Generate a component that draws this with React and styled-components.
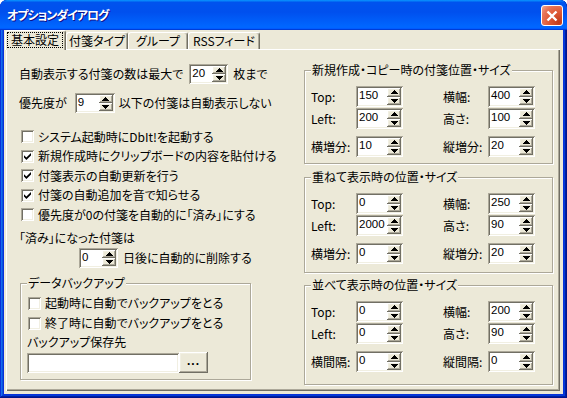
import React from 'react';
import styled, { createGlobalStyle } from 'styled-components';

const GlobalStyle = createGlobalStyle`
  html, body {
    margin: 0;
    padding: 0;
    background: #ffffff;
  }
  body {
    font-family: "Noto Sans CJK JP", "Noto Sans", sans-serif;
    font-size: 12px;
    color: #000;
    font-feature-settings: "palt";
  }
`;

const sunken = `
  box-shadow: inset 1px 1px #aca899, inset -1px -1px #ffffff,
    inset 2px 2px #716f64, inset -2px -2px #f1efe2;
`;

const raised = `
  box-shadow: inset -1px -1px #716f64, inset 1px 1px #ffffff,
    inset -2px -2px #aca899, inset 2px 2px #f1efe2;
`;

const Window = styled.div`
  width: 567px;
  height: 398px;
  display: flex;
  flex-direction: column;
  background: #0831d9;
  border-radius: 7px 7px 0 0;
  overflow: hidden;
  box-shadow: inset -1px -1px #00138c, inset 1px 1px #0831d9,
    inset -2px -2px #001ea0, inset 2px 2px #166aee,
    inset -3px -3px #003bda, inset 3px 3px #0855dd;
`;

const TitleBar = styled.div`
  flex: none;
  height: 30px;
  box-sizing: border-box;
  padding: 0 4px 1px 7px;
  display: flex;
  align-items: center;
  justify-content: space-between;
  border-radius: 7px 7px 0 0;
  background: linear-gradient(180deg, #0997ff, #0053ee 8%, #0050ee 40%,
    #0066ff 88%, #0066ff 93%, #005bff 95%, #003dd7 96%, #003dd7);
`;

const Title = styled.div`
  color: #fff;
  font-weight: bold;
  font-size: 12px;
  letter-spacing: -1px;
  text-shadow: 1px 1px #0f1089;
`;

const CloseButton = styled.div`
  box-sizing: border-box;
  width: 22px;
  height: 21px;
  margin-top: 2px;
  border: 1px solid #fff;
  border-radius: 3px;
  display: flex;
  align-items: center;
  justify-content: center;
  background: radial-gradient(circle at 85% 85%, #c23b1a 0%, #df5a36 45%, #e8765a 75%, #f4ab93 100%);
`;

const Client = styled.div`
  flex: 1;
  min-height: 0;
  margin: 0 4px 4px;
  padding: 0 3px 3px 2px;
  background: #ece9d8;
  display: flex;
  flex-direction: column;
`;

const TabStrip = styled.div`
  flex: none;
  height: 19px;
  margin-left: -1px;
  display: flex;
  align-items: flex-end;
  position: relative;
  z-index: 1;
`;

const Tab = styled.div`
  box-sizing: border-box;
  width: ${p => p.$w}px;
  height: ${p => (p.$active ? 20 : 17)}px;
  margin-bottom: ${p => (p.$active ? -1 : 0)}px;
  display: flex;
  align-items: center;
  justify-content: center;
  background: #ece9d8;
  border-top: 1px solid #fff;
  border-left: 1px solid #fff;
  border-right: 1px solid #716f64;
  border-radius: 3px 3px 0 0;
  box-shadow: inset -1px 0 #aca899;
  line-height: 14px;
  white-space: nowrap;
`;

const FocusLabel = styled.span`
  flex: 1;
  align-self: stretch;
  margin: 1px 2px 2px 1px;
  display: flex;
  align-items: center;
  justify-content: center;
  outline: 1px dotted #000;
  outline-offset: -1px;
`;

const Panel = styled.div`
  flex: 1;
  display: flex;
  justify-content: space-between;
  padding: 15px 7px 0 13px;
  box-shadow: inset 1px 1px #ffffff, inset -1px -1px #716f64, inset -2px -2px #aca899;
`;

const LeftCol = styled.div`
  width: 280px;
  display: flex;
  flex-direction: column;
`;

const RightCol = styled.div`
  width: 249px;
  margin-top: 6px;
  display: flex;
  flex-direction: column;
`;

const Row = styled.div`
  display: flex;
  align-items: center;
  height: ${p => p.$h || 20}px;
  margin-top: ${p => p.$mt || 0}px;
  padding-left: ${p => p.$pl || 0}px;
  white-space: nowrap;
  line-height: 16px;
`;

const CheckList = styled.div`
  margin-top: 14px;
`;

const CheckRow = styled.div`
  display: flex;
  align-items: center;
  height: ${p => p.$h || 19.5}px;
  padding-left: ${p => p.$pl ?? 2}px;
  white-space: nowrap;
  line-height: 16px;
`;

const Box = styled.span`
  box-sizing: border-box;
  flex: none;
  width: 13px;
  height: 13px;
  margin-right: 4px;
  display: flex;
  align-items: center;
  justify-content: center;
  background: #fff;
  ${sunken}
`;

const SpinBox = styled.div`
  box-sizing: border-box;
  flex: none;
  width: ${p => p.$w}px;
  height: ${p => p.$h || 20}px;
  margin: 0 ${p => p.$mr || 0}px 0 ${p => p.$ml || 0}px;
  padding: 2px;
  display: flex;
  background: #fff;
  ${sunken}
`;

const SpinValue = styled.span`
  flex: 1;
  padding-left: 1px;
  font-family: "Liberation Sans", "Noto Sans CJK JP", sans-serif;
  font-size: 11.5px;
  line-height: 14px;
  overflow: hidden;
`;

const SpinButtons = styled.div`
  width: 14px;
  display: flex;
  flex-direction: column;
`;

const SpinButton = styled.div`
  flex: 1;
  display: flex;
  align-items: center;
  justify-content: center;
  background: #ece9d8;
  ${raised}
`;

const GroupBox = styled.div`
  position: relative;
  box-sizing: border-box;
  height: ${p => p.$h}px;
  width: ${p => (p.$w ? `${p.$w}px` : 'auto')};
  margin: ${p => p.$mt || 0}px 0 0 ${p => p.$ml || 0}px;
  padding: ${p => p.$pt}px 0 0 6px;
  border: 1px solid #aca899;
  box-shadow: inset 1px 1px #fff, 1px 1px #fff;
  display: flex;
  flex-direction: column;
`;

const Legend = styled.span`
  position: absolute;
  top: -9px;
  left: 6px;
  padding: 0 1px;
  background: #ece9d8;
  line-height: 16px;
  white-space: nowrap;
`;

const FieldRow = styled.div`
  display: grid;
  grid-template-columns: 45px 87px 45px 47px;
  height: 21px;
  margin-top: ${p => p.$mt || 0}px;
  align-items: center;
  line-height: 16px;
  white-space: nowrap;
`;

const PathInput = styled.div`
  box-sizing: border-box;
  width: 152px;
  height: 20px;
  background: #fff;
  ${sunken}
`;

const DotsButton = styled.div`
  box-sizing: border-box;
  width: 29px;
  height: 21px;
  display: flex;
  align-items: center;
  justify-content: center;
  background: #ece9d8;
  font-family: "Liberation Sans", sans-serif;
  font-weight: bold;
  font-size: 12px;
  letter-spacing: 1px;
  padding-bottom: 3px;
  ${raised}
`;

const Arrow = ({ down }) => (
  <svg width="7" height="4" viewBox="0 0 7 4" shapeRendering="crispEdges">
    <polygon points={down ? '0,0 7,0 3.5,4' : '3.5,0 7,4 0,4'} fill="#000" />
  </svg>
);

const Spin = ({ value, w, h, ml, mr }) => (
  <SpinBox $w={w} $h={h} $ml={ml} $mr={mr}>
    <SpinValue>{value}</SpinValue>
    <SpinButtons>
      <SpinButton><Arrow /></SpinButton>
      <SpinButton><Arrow down /></SpinButton>
    </SpinButtons>
  </SpinBox>
);

const Check = ({ checked, label, pl }) => (
  <CheckRow $pl={pl} $h={pl === 1 ? 20 : undefined}>
    <Box>
      {checked && (
        <svg width="7" height="7" viewBox="0 0 7 7">
          <polygon points="0,2.2 2.4,4.6 7,0 7,2.4 2.4,7 0,4.6" fill="#000" />
        </svg>
      )}
    </Box>
    {label}
  </CheckRow>
);

const tabs = [
  { label: '基本設定', w: 61, active: true },
  { label: '付箋タイプ', w: 62 },
  { label: 'グループ', w: 60 },
  { label: 'RSSフィード', w: 72 },
];

const checks = [
  { label: 'システム起動時にDbIt!を起動する', checked: false },
  { label: '新規作成時にクリップボードの内容を貼付ける', checked: true },
  { label: '付箋表示の自動更新を行う', checked: true },
  { label: '付箋の自動追加を音で知らせる', checked: true },
  { label: '優先度が0の付箋を自動的に「済み」にする', checked: false },
];

const groups = [
  {
    title: '新規作成・コピー時の付箋位置・サイズ',
    h: 94,
    mt: 0,
    rows: [
      ['Top:', '150', '横幅:', '400'],
      ['Left:', '200', '高さ:', '100'],
      ['横増分:', '10', '縦増分:', '20'],
    ],
  },
  {
    title: '重ねて表示時の位置・サイズ',
    h: 96,
    mt: 13,
    rows: [
      ['Top:', '0', '横幅:', '250'],
      ['Left:', '2000', '高さ:', '90'],
      ['横増分:', '0', '縦増分:', '20'],
    ],
  },
  {
    title: '並べて表示時の位置・サイズ',
    h: 100,
    mt: 12,
    rows: [
      ['Top:', '0', '横幅:', '200'],
      ['Left:', '0', '高さ:', '90'],
      ['横間隔:', '0', '縦間隔:', '0'],
    ],
  },
];

const rowGaps = [0, 1, 7];

export default function App() {
  return (
    <>
      <GlobalStyle />
      <Window>
        <TitleBar>
          <Title>オプションダイアログ</Title>
          <CloseButton>
            <svg width="12" height="12" viewBox="0 0 12 12">
              <path d="M1.5 1.5 L10.5 10.5 M10.5 1.5 L1.5 10.5" stroke="#fff" strokeWidth="2.4" />
            </svg>
          </CloseButton>
        </TitleBar>
        <Client>
          <TabStrip>
            {tabs.map(t => (
              <Tab key={t.label} $w={t.w} $active={t.active}>
                {t.active ? <FocusLabel>{t.label}</FocusLabel> : t.label}
              </Tab>
            ))}
          </TabStrip>
          <Panel>
            <LeftCol>
              <Row>
                自動表示する付箋の数は最大で
                <Spin value="20" w={39} ml={6} mr={5} />
                枚まで
              </Row>
              <Row $mt={9}>
                優先度が
                <Spin value="9" w={40} ml={8} mr={4} />
                以下の付箋は自動表示しない
              </Row>
              <CheckList>
                {checks.map(c => (
                  <Check key={c.label} label={c.label} checked={c.checked} />
                ))}
              </CheckList>
              <Row $h={18} $mt={4}>「済み」になった付箋は</Row>
              <Row $mt={1.5} $pl={60}>
                <Spin value="0" w={39} mr={5} />
                日後に自動的に削除する
              </Row>
              <GroupBox $h={97} $w={231} $mt={15} $ml={1} $pt={9}>
                <Legend>データバックアップ</Legend>
                <Check pl={1} label="起動時に自動でバックアップをとる" />
                <Check pl={1} label="終了時に自動でバックアップをとる" />
                <Row $h={18}>バックアップ保存先</Row>
                <Row $h={21} $mt={1}>
                  <PathInput />
                  <DotsButton>...</DotsButton>
                </Row>
              </GroupBox>
            </LeftCol>
            <RightCol>
              {groups.map(g => (
                <GroupBox key={g.title} $h={g.h} $mt={g.mt} $pt={15}>
                  <Legend>{g.title}</Legend>
                  {g.rows.map((r, i) => (
                    <FieldRow key={r[0]} $mt={rowGaps[i]}>
                      <span>{r[0]}</span>
                      <Spin value={r[1]} w={47} h={21} />
                      <span>{r[2]}</span>
                      <Spin value={r[3]} w={47} h={21} />
                    </FieldRow>
                  ))}
                </GroupBox>
              ))}
            </RightCol>
          </Panel>
        </Client>
      </Window>
    </>
  );
}
